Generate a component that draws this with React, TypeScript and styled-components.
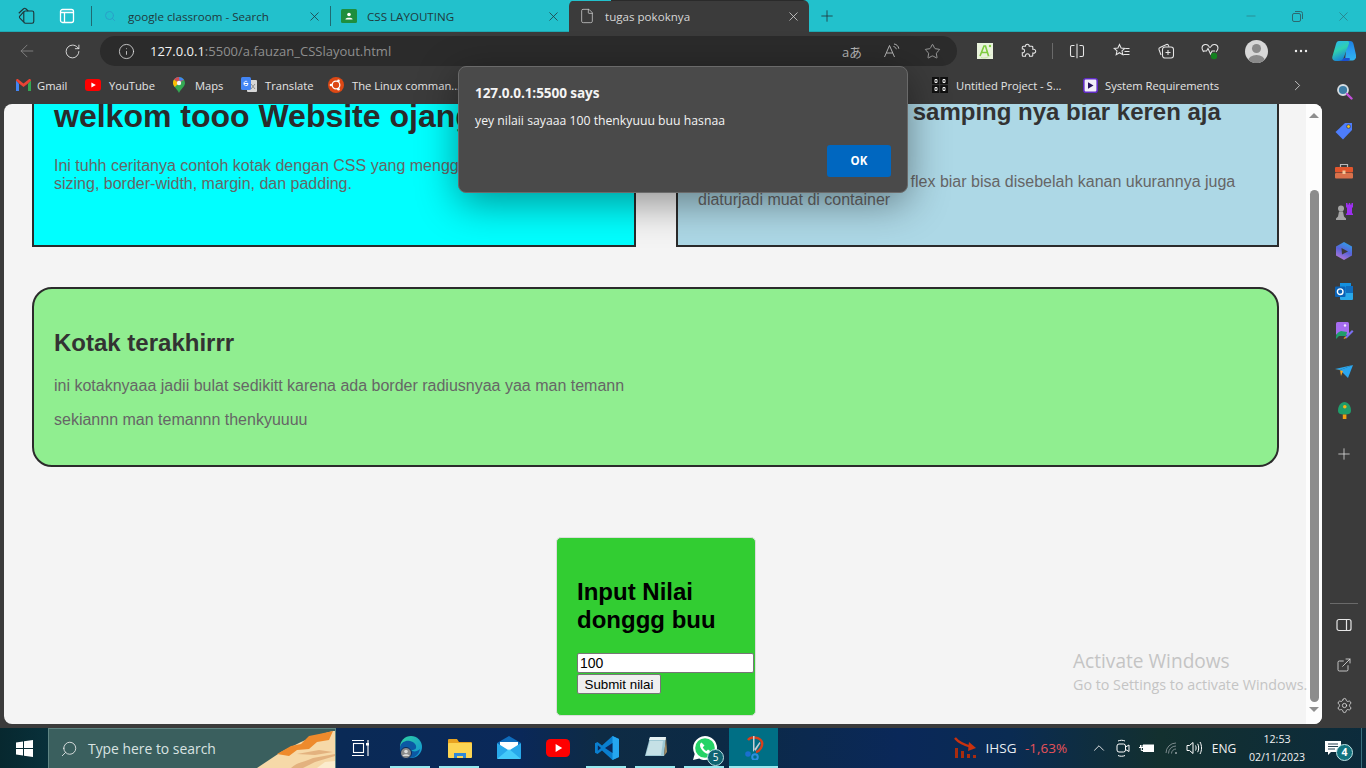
import React from 'react';
import styled, { createGlobalStyle } from 'styled-components';
import {
  ArrowLeft,
  ChevronRight,
  ChevronUp,
  ExternalLink,
  File,
  Info,
  Minus,
  Plus,
  RotateCw,
  Search,
  Settings,
  Star,
  X,
} from 'lucide-react';

const GlobalStyle = createGlobalStyle`
  html, body {
    margin: 0;
    padding: 0;
    overflow: hidden;
    background: #3b3b3b;
  }
`;

const uiFont = `'Open Sans', 'Noto Sans', sans-serif`;
const pageFont = `'Liberation Sans', Arial, sans-serif`;

const Screen = styled.div`
  position: relative;
  width: 1366px;
  height: 768px;
  display: flex;
  flex-direction: column;
  overflow: hidden;
  background: #3b3b3b;
  font-family: ${uiFont};
`;

/* ---- tab strip ---- */

const TabStrip = styled.div`
  height: 32px;
  flex: 0 0 auto;
  display: flex;
  align-items: stretch;
  padding-left: 6px;
  background: #22c1cc;
  box-shadow: inset 0 -1px 0 #1ea9b3;
  color: #1f3438;
`;

const Slot = styled.div<{ $w?: number; $ml?: number }>`
  width: ${(p) => p.$w ?? 44}px;
  margin-left: ${(p) => p.$ml ?? 0}px;
  flex: 0 0 auto;
  display: flex;
  align-items: center;
  justify-content: center;
  color: inherit;
`;

const TabSep = styled.div`
  width: 1px;
  height: 20px;
  align-self: center;
  background: #1f6a72;
  flex: 0 0 auto;
`;

const Tab = styled.div<{ $active?: boolean }>`
  width: ${(p) => (p.$active ? 240 : 238)}px;
  flex: 0 0 auto;
  display: flex;
  align-items: center;
  padding: 0 8px 0 9px;
  box-sizing: border-box;
  font-size: 11.6px;
  color: ${(p) => (p.$active ? '#d6d6d6' : '#20393d')};
  background: ${(p) =>
    p.$active ? 'linear-gradient(90deg, #22c1cc 42px, #2a2a2a 42px) 0 0 / 100% 1px no-repeat, #3b3b3b' : 'transparent'};
  border-radius: ${(p) => (p.$active ? '6px 6px 0 0' : '0')};
`;

const TabIcon = styled.div`
  width: 18px;
  height: 18px;
  flex: 0 0 auto;
  display: flex;
  align-items: center;
  justify-content: center;
  margin-right: 9px;
`;

const TabTitle = styled.span`
  flex: 1 1 auto;
  white-space: nowrap;
`;

const Grow = styled.div`
  flex: 1 1 auto;
`;

/* ---- toolbar ---- */

const Toolbar = styled.div`
  height: 36px;
  flex: 0 0 auto;
  display: flex;
  align-items: center;
  box-sizing: border-box;
  padding: 2px 0 0 5px;
  background: #3b3b3b;
  color: #e6e6e6;
`;

const AddressBar = styled.div`
  width: 857px;
  height: 30px;
  margin-left: 6px;
  flex: 0 0 auto;
  display: flex;
  align-items: center;
  padding: 0 5px 0 18px;
  box-sizing: border-box;
  border-radius: 15px;
  background: #2b2b2b;
  color: #bdbdbd;
`;

const Url = styled.div`
  margin-left: 15px;
  font-size: 13px;
  color: #8f8f8f;
  white-space: nowrap;
  flex: 1 1 auto;

  b {
    font-weight: 400;
    color: #f2f2f2;
  }
`;

const ToolSep = styled.div`
  width: 1px;
  height: 16px;
  margin: 0 1px;
  background: #6a6a6a;
  flex: 0 0 auto;
`;

const TranslateGlyph = styled.span`
  font-size: 13px;
  color: #b5b5b5;
  font-family: ${uiFont}, 'Noto Sans CJK JP';
  white-space: nowrap;
`;

const Avatar = styled.div`
  width: 23px;
  height: 23px;
  border-radius: 50%;
  overflow: hidden;
  background: #d8d8d8;
  position: relative;

  &::before {
    content: '';
    position: absolute;
    left: 7px;
    top: 4px;
    width: 9px;
    height: 9px;
    border-radius: 50%;
    background: #8a8a8a;
  }

  &::after {
    content: '';
    position: absolute;
    left: 3px;
    top: 15px;
    width: 17px;
    height: 12px;
    border-radius: 50%;
    background: #8a8a8a;
  }
`;

/* ---- body below toolbar ---- */

const Workspace = styled.div`
  flex: 1 1 auto;
  min-height: 0;
  display: flex;
`;

const BrowserColumn = styled.div`
  width: 1322px;
  flex: 0 0 auto;
  display: flex;
  flex-direction: column;
`;

const Bookmarks = styled.div`
  height: 36px;
  flex: 0 0 auto;
  display: flex;
  align-items: center;
  box-sizing: border-box;
  padding: 0 0 2px 15px;
  color: #e4e4e4;
  font-size: 11.2px;
`;

const Bookmark = styled.div<{ $w: number; $gap?: number }>`
  width: ${(p) => p.$w}px;
  flex: 0 0 auto;
  display: flex;
  align-items: center;
  gap: ${(p) => p.$gap ?? 8}px;
  white-space: nowrap;
`;

const BookmarkIcon = styled.div`
  width: 16px;
  height: 16px;
  flex: 0 0 auto;
  display: flex;
  align-items: center;
  justify-content: center;
`;

const PagePanel = styled.div`
  flex: 1 1 auto;
  min-height: 0;
  margin: 0 0 4px 4px;
  display: flex;
  border-radius: 8px;
  overflow: hidden;
  background: #f4f4f4;
`;

const PageScroll = styled.div`
  flex: 1 1 auto;
  min-width: 0;
  overflow: hidden;
  font-family: ${pageFont};
  color: #333;
`;

const PageInner = styled.div`
  margin-top: -40px;
  padding: 0 27px 0 28px;
`;

const CardRow = styled.div`
  display: flex;
  gap: 40px;
`;

const Card = styled.section<{ $bg: string; $w: number }>`
  width: ${(p) => p.$w}px;
  height: 183px;
  flex: 0 0 auto;
  box-sizing: border-box;
  padding: 32px 20px 0;
  border: 2px solid #2b2b2b;
  background: ${(p) => p.$bg};
`;

const BigTitle = styled.h1`
  margin: 0 0 22px;
  font-size: 32px;
  line-height: 37px;
  font-weight: 700;
  white-space: nowrap;
  color: #2b2b2b;
`;

const Title = styled.h2`
  margin: 0 0 19px;
  font-size: 24px;
  line-height: 28px;
  font-weight: 700;
  color: #333;
`;

const Text = styled.p`
  margin: 0;
  font-size: 16px;
  line-height: 18px;
  color: #666;
`;

const RoundCard = styled.section`
  margin-top: 40px;
  height: 180px;
  box-sizing: border-box;
  padding: 40px 20px 0;
  border: 2px solid #2b2b2b;
  border-radius: 20px;
  background: #90ee90;

  ${Title} {
    margin-bottom: 20px;
  }

  ${Text} {
    margin-bottom: 16px;
  }
`;

const FormCard = styled.form`
  width: 200px;
  height: 179px;
  margin: 70px 0 0 524px;
  box-sizing: border-box;
  padding: 40px 20px 0;
  border: 1px solid #dcdcdc;
  border-radius: 5px;
  background: #32cd32;

  ${Title} {
    margin-bottom: 19px;
    color: #000;
  }
`;

const ScoreInput = styled.input`
  display: block;
  width: 177px;
  height: 20px;
  box-sizing: border-box;
  padding: 1px 2px;
  margin: 0;
  font-family: ${pageFont};
  font-size: 14px;
  border: 1px solid #767676;
  border-radius: 2px;
  background: #fff;
  color: #000;
`;

const SubmitButton = styled.button`
  display: block;
  width: 84px;
  height: 20px;
  margin: 1px 0 0;
  padding: 0;
  font-family: ${pageFont};
  font-size: 13.33px;
  color: #000;
  border: 1px solid #767676;
  border-radius: 2px;
  background: #efefef;
`;

const Scrollbar = styled.div`
  width: 16px;
  flex: 0 0 auto;
  display: flex;
  flex-direction: column;
  align-items: center;
  background: #fdfdfd;
`;

const ScrollArrow = styled.div<{ $down?: boolean }>`
  width: 0;
  height: 0;
  margin: ${(p) => (p.$down ? '5px 0 0' : '9px 0 0')};
  border-left: 5px solid transparent;
  border-right: 5px solid transparent;
  border-bottom: ${(p) => (p.$down ? '0' : '5px solid #8f8f8f')};
  border-top: ${(p) => (p.$down ? '5px solid #8f8f8f' : '0')};
`;

const ScrollThumb = styled.div`
  width: 9px;
  height: 512px;
  margin-top: 72px;
  border-radius: 5px;
  background: #8c8c8c;
`;

/* ---- edge sidebar ---- */

const Sidebar = styled.aside`
  width: 44px;
  flex: 0 0 auto;
  display: flex;
  flex-direction: column;
  align-items: center;
  padding: 3px 0 3px;
  box-sizing: border-box;
  color: #e6e6e6;
`;

const SideIcon = styled.div<{ $mt?: number }>`
  width: 44px;
  height: 40px;
  margin-top: ${(p) => p.$mt ?? 0}px;
  flex: 0 0 auto;
  display: flex;
  align-items: center;
  justify-content: center;
`;

const SideRule = styled.div`
  width: 28px;
  height: 1px;
  flex: 0 0 auto;
  margin-bottom: 1px;
  background: #6a6a6a;
`;

/* ---- taskbar ---- */

const Taskbar = styled.footer`
  height: 40px;
  flex: 0 0 auto;
  display: flex;
  align-items: stretch;
  color: #f2f2f2;
  background: linear-gradient(
    90deg,
    #07282f 0,
    #08303a 48px,
    #0a2a56 340px,
    #0a2859 520px,
    #0e2b44 600px,
    #0c2a45 720px,
    #0a2859 900px,
    #0a2b52 1010px,
    #13302f 1160px,
    #0c2b3c 1366px
  );
`;

const StartButton = styled.div`
  width: 48px;
  flex: 0 0 auto;
  display: flex;
  align-items: center;
  justify-content: center;
`;

const SearchBox = styled.div`
  width: 288px;
  flex: 0 0 auto;
  position: relative;
  overflow: hidden;
  display: flex;
  align-items: center;
  gap: 10px;
  box-sizing: border-box;
  padding-left: 11px;
  border: 1px solid #5f8583;
  border-bottom: 0;
  background: #3a5f5e;
  color: #d9e3e2;
  font-size: 13.9px;
`;

const SearchArt = styled.svg`
  position: absolute;
  right: 0;
  bottom: 0;
`;

const TaskButton = styled.div<{ $on?: boolean; $active?: boolean; $w?: number }>`
  position: relative;
  width: ${(p) => p.$w ?? 49}px;
  flex: 0 0 auto;
  display: flex;
  align-items: center;
  justify-content: center;
  background: ${(p) => (p.$active ? '#006f85' : 'transparent')};

  &::after {
    content: '';
    display: ${(p) => (p.$on ? 'block' : 'none')};
    position: absolute;
    bottom: 0;
    left: ${(p) => (p.$active ? 0 : 4)}px;
    right: ${(p) => (p.$active ? 0 : 5)}px;
    height: 2px;
    background: #97e9ef;
  }
`;

const CountBadge = styled.span`
  position: absolute;
  right: 5px;
  bottom: 2px;
  width: 15px;
  height: 15px;
  border-radius: 50%;
  border: 1px solid #bcdfe3;
  background: #0f6472;
  color: #fff;
  font-size: 10px;
  line-height: 15px;
  text-align: center;
`;

const Tray = styled.div`
  display: flex;
  align-items: center;
  flex: 0 0 auto;
  font-size: 12px;
`;

const TrayItem = styled.div<{ $w: number; $ml?: number }>`
  width: ${(p) => p.$w}px;
  margin-left: ${(p) => p.$ml ?? 0}px;
  flex: 0 0 auto;
  display: flex;
  align-items: center;
  justify-content: center;
`;

const Ticker = styled.span<{ $down?: boolean }>`
  font-size: 13.5px;
  white-space: nowrap;
  color: ${(p) => (p.$down ? '#e8525a' : '#e8eef2')};
`;

const Clock = styled.div`
  width: 68px;
  flex: 0 0 auto;
  text-align: center;
  font-size: 10.6px;
  line-height: 18px;
`;

const Notify = styled.div`
  position: relative;
  width: 51px;
  height: 40px;
  flex: 0 0 auto;
  display: flex;
  align-items: center;
  justify-content: center;
  box-sizing: border-box;
  padding-right: 7px;
  border-right: 1px solid #3b6f7d;
  margin-right: 4px;
`;

const NotifyCount = styled.span`
  position: absolute;
  left: 25px;
  top: 16px;
  width: 15px;
  height: 15px;
  border-radius: 50%;
  border: 1px solid #bfe3e6;
  background: #12737f;
  color: #fff;
  font-size: 10.5px;
  font-weight: 700;
  line-height: 15px;
  text-align: center;
`;

/* ---- overlays ---- */

const Dialog = styled.div`
  position: absolute;
  left: 458px;
  top: 66px;
  width: 450px;
  height: 127px;
  box-sizing: border-box;
  padding: 17px 16px 0;
  border: 1px solid #6a6a6a;
  border-radius: 8px;
  background: #4a4a4a;
  color: #f4f4f4;
  box-shadow: 0 10px 40px rgba(0, 0, 0, 0.42);
`;

const DialogTitle = styled.div`
  font-size: 13.6px;
  line-height: 18px;
  font-weight: 700;
  letter-spacing: -0.1px;
`;

const DialogMessage = styled.div`
  margin-top: 10px;
  font-size: 12.24px;
  line-height: 18px;
`;

const DialogActions = styled.div`
  display: flex;
  justify-content: flex-end;
  margin-top: 15px;
`;

const OkButton = styled.div`
  width: 64px;
  height: 32px;
  border-radius: 3px;
  background: #0067c0;
  color: #fff;
  font-size: 11.5px;
  font-weight: 700;
  line-height: 32px;
  text-align: center;
`;

const Watermark = styled.div`
  position: absolute;
  left: 1073px;
  top: 649px;
  color: #c4c4c4;
  white-space: nowrap;
  pointer-events: none;

  div:first-child {
    font-size: 19.1px;
    line-height: 25px;
  }

  div:last-child {
    font-size: 14.3px;
    line-height: 21px;
  }
`;

/* ---- hand drawn icons ---- */

const WorkspacesIcon = () => (
  <svg width="20" height="20" viewBox="0 0 18 18" fill="none" stroke="currentColor" strokeWidth="1">
    <rect x="7" y="4.500" width="9" height="11" rx="1.500" />
    <path d="M7 14.500 3.500 11a1.400 1.400 0 0 1 0-2L7 5M11 4.500 8.800 2.500a1.400 1.400 0 0 0-2 0L2.500 6.500" />
  </svg>
);

const TabActionsIcon = () => (
  <svg width="16" height="16" viewBox="0 0 16 16" fill="none" stroke="#ffffff" strokeWidth="1.300">
    <rect x="1.500" y="1.500" width="13" height="13" rx="2" fill="#22c1cc" />
    <path d="M1.500 4.500h13M5.500 4.500v10" />
  </svg>
);

const ClassroomIcon = () => (
  <svg width="16" height="14" viewBox="0 0 16 14">
    <rect width="16" height="14" rx="1.500" fill="#1e8e3e" />
    <circle cx="8" cy="5.500" r="1.800" fill="#fff" />
    <path d="M4.500 10c.5-1.800 6.500-1.800 7 0v.6h-7z" fill="#fff" />
  </svg>
);

const GmailIcon = () => (
  <svg width="15" height="12" viewBox="0 0 15 12">
    <path d="M0 1.500V12h3V4.500z" fill="#4285f4" />
    <path d="M15 1.500V12h-3V4.500z" fill="#34a853" />
    <path d="M0 1.500C0 .2 1.500-.4 2.400.4L7.500 4.500 12.600.4c.9-.8 2.400-.2 2.400 1.100L12 4.500 7.500 8 3 4.500z" fill="#ea4335" />
  </svg>
);

const YoutubeIcon = ({ size = 16 }: { size?: number }) => (
  <svg width={size} height={(size * 12) / 16} viewBox="0 0 16 12">
    <rect width="16" height="12" rx="3" fill="#f00" />
    <path d="M6.400 3.400 10.800 6l-4.400 2.600z" fill="#fff" />
  </svg>
);

const MapsIcon = () => (
  <svg width="12" height="16" viewBox="0 0 12 16">
    <path d="M6 0a6 6 0 0 1 6 6c0 3.500-4.200 6-6 10C4.200 12 0 9.500 0 6a6 6 0 0 1 6-6z" fill="#34a853" />
    <path d="M1 2.500 6 6l5-3.200A6 6 0 0 0 6 0a6 6 0 0 0-5 2.500z" fill="#4285f4" />
    <path d="M0 6c0 1.500.8 2.800 1.800 4L6 6 1 2.500A6 6 0 0 0 0 6z" fill="#fbbc04" />
    <path d="M11 2.800 6 6 1 2.500C2 1 4 0 6 0l.5 4z" fill="#ea4335" opacity=".85" />
    <circle cx="6" cy="6" r="2.200" fill="#f4f4f4" />
  </svg>
);

const TranslateIcon = () => (
  <svg width="16" height="16" viewBox="0 0 16 16">
    <rect x="6" y="3" width="10" height="12" rx="1" fill="#d7d7d7" />
    <rect width="10" height="13" rx="1.500" fill="#4285f4" />
    <path d="M3 6.500h4M7 6.500a2 2.200 0 1 1-.7-1.700" fill="none" stroke="#fff" strokeWidth="1" />
    <path d="m10 7 4 5M14 7l-4 5" stroke="#8d8d8d" strokeWidth="1" />
  </svg>
);

const UbuntuIcon = () => (
  <svg width="16" height="16" viewBox="0 0 16 16">
    <circle cx="8" cy="8" r="8" fill="#dd4814" />
    <circle cx="8" cy="8" r="3.800" fill="none" stroke="#fff" strokeWidth="1.300" />
    <circle cx="3" cy="8" r="1.300" fill="#fff" />
    <circle cx="10.500" cy="3.700" r="1.300" fill="#fff" />
    <circle cx="10.500" cy="12.300" r="1.300" fill="#fff" />
  </svg>
);

const CodeOrgIcon = () => (
  <svg width="16" height="16" viewBox="0 0 16 16">
    <rect width="16" height="16" fill="#111" />
    <path d="M3 2.500h2v3H3zM11 2.500h2v3h-2zM3 10.500h2v3H3zM11 10.500h2v3h-2z" fill="none" stroke="#f2f2f2" strokeWidth="1" />
    <path d="M7.700 0v16M0 7.700h16" stroke="#3b3b3b" strokeWidth="1" />
  </svg>
);

const SystemReqIcon = () => (
  <svg width="15" height="15" viewBox="0 0 15 15">
    <rect x=".8" y=".8" width="13.400" height="13.400" rx="2" fill="#f1eef8" stroke="#5f2bc4" strokeWidth="1.600" />
    <path d="M5 4.200 10.500 7.500 5 10.800z" fill="#27115c" />
  </svg>
);

const ReadAloudIcon = () => (
  <svg width="18" height="16" viewBox="0 0 18 16" fill="none" stroke="#b5b5b5" strokeWidth="1">
    <path d="M1.500 14 6.500 2.500 11.500 14M3.300 10h6.400M10.500 3.500c1.500.3 2.500 1.300 2.800 2.700M11 1c2.700.4 4.400 2 4.800 4.700" />
  </svg>
);

const AppGreenIcon = () => (
  <svg width="16" height="16" viewBox="0 0 16 16">
    <rect width="16" height="16" fill="#e9f3dc" />
    <path d="M3 13 7 3h1.500l3 10M5 9.500h6" fill="none" stroke="#7ecb3f" strokeWidth="1.600" />
    <circle cx="13" cy="3" r="1.200" fill="#7ecb3f" />
    <path d="M4 14.500c3.500 1 7 .5 10-3" fill="none" stroke="#c6e2a8" strokeWidth="1" />
  </svg>
);

const PuzzleIcon = () => (
  <svg width="16" height="16" viewBox="0 0 16 16" fill="none" stroke="currentColor" strokeWidth="1.050">
    <path d="M6.300 1.200c1.400 0 2 1 1.900 2h2.600a1 1 0 0 1 1 1v2.100c1.600-.4 2.900.6 2.900 1.900s-1.300 2.300-2.900 1.900v2.200a1 1 0 0 1-1 1H8.500c.2-1.700-.8-2.600-2-2.600s-2.200.9-2 2.600H2.300c-.6 0-1-.4-1-1v-2.600c1.400.2 2.300-.7 2.300-1.900S2.700 5.700 1.300 5.900V4.200c0-.6.400-1 1-1h2.200c-.1-1 .5-2 1.800-2z" />
  </svg>
);

const SplitIcon = () => (
  <svg width="16" height="16" viewBox="0 0 16 16" fill="none" stroke="currentColor" strokeWidth="1.050">
    <path d="M5.500 2.500H3a1.500 1.500 0 0 0-1.500 1.500v8A1.500 1.500 0 0 0 3 13.500h2.500M10.500 2.500H13A1.500 1.500 0 0 1 14.500 4v8a1.500 1.500 0 0 1-1.500 1.500h-2.500M8 .8v14.400" />
  </svg>
);

const FavoritesIcon = () => (
  <svg width="18" height="16" viewBox="0 0 18 16" fill="none" stroke="currentColor" strokeWidth="1.050">
    <path d="M6.500 1.500 8.100 5l3.700.4-2.800 2.500.8 3.700-3.300-1.900-3.300 1.900.8-3.700L1.200 5.400 4.900 5zM12.500 5.500h4M11.500 8.500h5M10.500 11.500h6" />
  </svg>
);

const CollectionsIcon = () => (
  <svg width="18" height="18" viewBox="0 0 18 18" fill="none" stroke="currentColor" strokeWidth="1.050">
    <rect x="5.500" y="5" width="11" height="11" rx="2.500" />
    <path d="M11 8v5M8.500 10.500h5M4 13 2 7.500c-.3-1 .2-1.800 1-2.100L9.500 2.500c.8-.3 1.700.1 2 1l.5 1.200" />
  </svg>
);

const HealthIcon = () => (
  <svg width="18" height="18" viewBox="0 0 18 18">
    <path
      d="M3 10C1.500 8.500 1 7.500 1 6a3.700 3.700 0 0 1 7-1.500l1 1 1-1A3.700 3.700 0 0 1 17 6c0 1.500-.5 2.500-2 4M1.500 9H5.500L7 6.500 9.500 12 11 9h3"
      fill="none"
      stroke="#e6e6e6"
      strokeWidth="1.050"
    />
    <circle cx="13" cy="14" r="3.200" fill="#13801f" />
  </svg>
);

const CopilotIcon = () => (
  <svg width="24" height="22" viewBox="0 0 24 22">
    <defs>
      <linearGradient id="copL" x1="0.2" y1="0" x2="0.6" y2="1">
        <stop offset="0" stopColor="#2ab8ee" />
        <stop offset="0.45" stopColor="#2fd0b0" />
        <stop offset="1" stopColor="#1778d8" />
      </linearGradient>
      <linearGradient id="copR" x1="0.5" y1="0" x2="0.5" y2="1">
        <stop offset="0" stopColor="#1d7fe0" />
        <stop offset="0.5" stopColor="#2a9cf0" />
        <stop offset="1" stopColor="#2fb6ee" />
      </linearGradient>
    </defs>
    <path d="M15 1h3c2 0 3 1 3.500 3L24 15c.5 3-1 5-3.500 5.500H13z" fill="url(#copR)" />
    <path d="M8 21h7c2.500 0 3.500-1 2.500-3H12z" fill="#1b4fd0" />
    <path d="M7 1h8c1.500 0 2.500 1 2 2.500L12 17c-.8 2.500-2.500 4-5 4H4c-3 0-4.300-2-3.600-4.500L4 4C4.500 2 5.500 1 7 1z" fill="url(#copL)" />
  </svg>
);

const SearchSideIcon = () => (
  <svg width="17" height="17" viewBox="0 0 17 17">
    <circle cx="7" cy="7" r="5" fill="#3d7da6" stroke="#d6dde2" strokeWidth="1.800" />
    <path d="m11 11 4.500 4.500" stroke="#c14fd8" strokeWidth="2.400" strokeLinecap="round" />
  </svg>
);

const TagIcon = () => (
  <svg width="18" height="18" viewBox="0 0 18 18">
    <path d="M10 1h7v7l-9 9.500-7.500-7.500z" fill="#4d7dfb" />
    <circle cx="13.500" cy="4.500" r="1.900" fill="#f5c518" stroke="#243a8c" strokeWidth=".8" />
  </svg>
);

const ToolboxIcon = () => (
  <svg width="18" height="16" viewBox="0 0 18 16">
    <path d="M5.500 4V1.500h7V4" fill="none" stroke="#b9b9b9" strokeWidth="1.200" />
    <rect y="4" width="18" height="5.500" rx="1" fill="#e2562d" />
    <rect y="10" width="18" height="5.500" rx="1" fill="#d9714b" />
    <rect x="7.500" y="7.500" width="3" height="3.500" fill="#f2c79a" />
  </svg>
);

const ChessIcon = () => (
  <svg width="19" height="19" viewBox="0 0 19 19">
    <path d="M11 1h1.500v1.500h1.300V1h1.400v1.500h1.300V1H18v4l-1 1v5l1 1v1h-7v-1l1-1V6l-1-1z" fill="#9d2ff0" />
    <circle cx="6" cy="6.500" r="3" fill="#a4a4a4" />
    <path d="M4 9.500h4l1 5 2 2v1.500H1v-1.500l2-2z" fill="#a4a4a4" />
  </svg>
);

const M365Icon = () => (
  <svg width="18" height="18" viewBox="0 0 18 18">
    <defs>
      <linearGradient id="m365" x1="0.7" y1="0" x2="0.3" y2="1">
        <stop offset="0" stopColor="#2f9fe8" />
        <stop offset="0.5" stopColor="#5a62d8" />
        <stop offset="1" stopColor="#b47ad8" />
      </linearGradient>
    </defs>
    <path d="M9 0 17 4.500v9L9 18 1 13.500v-9z" fill="url(#m365)" />
    <path d="M6.500 6 13 9.500 7 12.500z" fill="#3b3b3b" />
  </svg>
);

const OutlookIcon = () => (
  <svg width="18" height="17" viewBox="0 0 18 17">
    <rect x="5" y="0" width="11" height="8" fill="#1490df" />
    <rect x="5" y="8" width="13" height="9" rx="1" fill="#28a8ea" />
    <rect x="11" y="3" width="7" height="7" fill="#0f6cbd" />
    <rect y="3.500" width="10.500" height="10.500" rx="1" fill="#0b62b5" />
    <circle cx="5.200" cy="8.700" r="2.800" fill="none" stroke="#fff" strokeWidth="1.400" />
  </svg>
);

const DesignerIcon = () => (
  <svg width="19" height="19" viewBox="0 0 19 19">
    <rect x="1" y="0" width="13" height="13" rx="1.500" fill="#a66cf0" />
    <circle cx="10" cy="3.500" r="1.200" fill="#f2e9ff" />
    <path d="M1 15c0-3 2-5 5-6l6 1-1 4H4l-3 3z" fill="#1f9d6b" />
    <path d="m10 15 7-7 1.500 1.500-7 7z" fill="#7a6ff0" />
    <path d="m8.500 17 1.500-2.500 1.500 1.500z" fill="#f5a623" />
  </svg>
);

const SendIcon = () => (
  <svg width="18" height="13" viewBox="0 0 18 13">
    <path d="M0 4 18 0 5 5z" fill="#29a8f0" />
    <path d="M5 5 18 0 13 13z" fill="#2ba6ee" />
    <path d="M0 4 5 5l1 6 2-5z" fill="#f5a623" />
  </svg>
);

const TreeIcon = () => (
  <svg width="15" height="18" viewBox="0 0 15 18">
    <path d="M7.500 0C11 0 14 4 14 8.500c0 3-2 4-6.500 4S1 11.500 1 8.500C1 4 4 0 7.500 0z" fill="#1f9d6b" />
    <rect x="5.800" y="12.500" width="3.600" height="4.500" fill="#ef9d11" />
    <circle cx="7.800" cy="4.800" r="1.800" fill="#f5b21b" />
  </svg>
);

const PanelIcon = () => (
  <svg width="16" height="14" viewBox="0 0 16 14" fill="none" stroke="currentColor" strokeWidth="1.200">
    <rect x="1" y="1.500" width="14" height="11" rx="2" />
    <path d="M10.500 1.500v11" />
  </svg>
);

const WindowsLogo = () => (
  <svg width="17" height="17" viewBox="0 0 17 17" fill="#fff">
    <path d="M0 2.400 7 1.400V8H0zM8 1.200 17 0v8H8zM0 9h7v6.600l-7-1zM8 9h9v8l-9-1.200z" />
  </svg>
);

const HillArt = () => (
  <SearchArt width="78" height="40" viewBox="0 0 78 40">
    <path d="M0 40 24 24l20-10L58 8l18-5h2v37z" fill="#f6d9a8" />
    <path d="M20 26 34 18l10-2 8-8 10-2 14-3-4 9-12 2-8 7-12 1-8 6z" fill="#ee8a2c" />
    <path d="M34 40c6-6 14-6 22-10l22-4v2l-20 6-12 6zM40 26l22-4 14 2-18 3z" fill="#e3b27f" />
    <path d="M60 40l8-6 10-1v7z" fill="#fbeccd" />
  </SearchArt>
);

const TaskViewIcon = () => (
  <svg width="18" height="18" viewBox="0 0 18 18" fill="none" stroke="#fff" strokeWidth="1.100">
    <path d="M0 1.500h12M0 16.500h12M16 1v16" />
    <rect x="1.500" y="4.500" width="10" height="9" />
    <rect x="14" y="4" width="3" height="2.500" fill="#fff" stroke="none" />
  </svg>
);

const EdgeIcon = () => (
  <svg width="24" height="24" viewBox="0 0 24 24">
    <defs>
      <linearGradient id="edgeA" x1="0" y1="0" x2="1" y2="1">
        <stop offset="0" stopColor="#2fd3a0" />
        <stop offset="1" stopColor="#0f8fd8" />
      </linearGradient>
    </defs>
    <circle cx="12" cy="11" r="11" fill="url(#edgeA)" />
    <path d="M1 11C2 6 7 4 11 5c4 1 7 4 6 7-.5 1.500-2 2-5 2 2 2 6 2 9-1-1 6-6 9-10 9C5 22 0 17 1 11z" fill="#0c59a4" />
    <circle cx="7" cy="17" r="5.500" fill="#8b8b8b" stroke="#0a2859" />
    <circle cx="7" cy="15.500" r="1.800" fill="#dcdcdc" />
    <path d="M3.500 20c.5-2.500 6.500-2.500 7 0z" fill="#dcdcdc" />
  </svg>
);

const ExplorerIcon = () => (
  <svg width="24" height="20" viewBox="0 0 24 20">
    <path d="M0 2a1 1 0 0 1 1-1h8l2 3h12a1 1 0 0 1 1 1v3H0z" fill="#e8a320" />
    <rect y="5" width="24" height="15" rx="1" fill="#fcd553" />
    <path d="M6 15h12v5h-3v-2H9v2H6z" fill="#2f88d8" />
  </svg>
);

const MailIcon = () => (
  <svg width="24" height="24" viewBox="0 0 24 24">
    <path d="M0 7 12 0l12 7-12 8z" fill="#0f6cbd" />
    <path d="M3 6h18v8l-9 5-9-5z" fill="#fff" />
    <path d="M0 7v15a1 1 0 0 0 1 1h22a1 1 0 0 0 1-1V7l-12 7.500z" fill="#28a8ea" />
    <path d="M0 23 12 13l12 10z" fill="#50d9ff" opacity=".7" />
  </svg>
);

const VsCodeIcon = () => (
  <svg width="24" height="24" viewBox="0 0 24 24">
    <path d="M17.500 0 24 3v18l-6.500 3L7 14.500 2.500 18 0 16.700V7.300L2.500 6 7 9.500z" fill="#0a7fcf" />
    <path d="M17.500 0 24 3v18l-6.500 3z" fill="#25a6f0" />
    <path d="M17.500 7 10 12l7.500 5z" fill="#0a2859" />
    <path d="M2.800 9.300 6 12l-3.200 2.700z" fill="#0a2859" />
  </svg>
);

const NotepadIcon = () => (
  <svg width="24" height="24" viewBox="0 0 24 24">
    <path d="M6 1h16l-2 19H1z" fill="#9ec8d4" />
    <path d="M6 1h16l-.3 3H5z" fill="#e6f2f4" />
    <path d="m2 19 4-14h13l-2 14z" fill="#c5e0e6" />
    <path d="M22 1l1 15-3 4z" fill="#a08a62" />
  </svg>
);

const WhatsappIcon = () => (
  <svg width="24" height="24" viewBox="0 0 24 24">
    <path d="M12 0a12 12 0 0 1 0 24c-2 0-4-.5-5.700-1.500L0 24l1.700-6A12 12 0 0 1 12 0z" fill="#fff" />
    <circle cx="12" cy="12" r="9.800" fill="#25d366" />
    <path d="M8.500 6.500c-1.500 1-2 2.500-1 5 1 2.500 3.500 5 6 6 2 .5 3.500 0 4.500-2l-3-2-1.500 1.500c-1.500-.5-3-2-3.700-3.700L11.500 9.500z" fill="#fff" />
  </svg>
);

const SnipIcon = () => (
  <svg width="20" height="24" viewBox="0 0 20 24">
    <path d="M4 4c3-4 12-3 14 2 1 4-2 9-6 10" fill="none" stroke="#d8401c" strokeWidth="2.400" />
    <path d="M9 0h1.500v14L9 16zM10.500 13l5-7 1 1-5 8z" fill="#c8ced3" />
    <circle cx="4" cy="18" r="2.800" fill="#1a6fd0" />
    <circle cx="11" cy="21" r="2.800" fill="none" stroke="#2d8ee0" strokeWidth="2" />
  </svg>
);

const StockDownIcon = () => (
  <svg width="24" height="22" viewBox="0 0 24 22">
    <path d="M1 1c4 5 9 7 17 9" fill="none" stroke="#c9320f" strokeWidth="2.400" />
    <path d="m15 5 7 6-8 3z" fill="#c9320f" />
    <path d="M1 11h3v10H1zM7 14h3v7H7zM13 17h3v4h-3zM19 18h3v3h-3z" fill="#a92c0f" />
  </svg>
);

const MeetIcon = () => (
  <svg width="14" height="18" viewBox="0 0 14 18" fill="none" stroke="#fff" strokeWidth="1">
    <rect x="1" y="5" width="8.500" height="8" rx="2" />
    <path d="m9.500 8 3.500-2v6.500L9.500 10.500M2 2c2-1 5-1 7 0M2 16.500c2 1 5 1 7 0" />
  </svg>
);

const BatteryIcon = () => (
  <svg width="16" height="12" viewBox="0 0 16 12">
    <rect x="4" y="2.500" width="11" height="7.500" fill="#fff" />
    <path d="M0 5.500h4M1.500 3v2M3 3v2M2.300 6v2.500H4" fill="none" stroke="#fff" strokeWidth="1" />
  </svg>
);

const WifiIcon = () => (
  <svg width="14" height="13" viewBox="0 0 14 13" fill="none" stroke="#7c8a8d" strokeWidth="1">
    <path d="M1 11a10 10 0 0 1 10-10M3.500 11.500a7.500 7.500 0 0 1 7.500-7.500M6.500 11.500a4.500 4.500 0 0 1 4.500-4.500" />
    <circle cx="11" cy="11" r="1" fill="#9aa5a7" stroke="none" />
  </svg>
);

const VolumeIcon = () => (
  <svg width="17" height="14" viewBox="0 0 17 14" fill="none" stroke="#fff" strokeWidth="1">
    <path d="M1 4.500h2.500L7 1.500v11L3.500 9.500H1zM9.500 4.500c.8 1.500.8 3.500 0 5M11.700 2.800c1.300 2.600 1.300 5.800 0 8.400M14 1c2 3.500 2 8.500 0 12" />
  </svg>
);

const NotifyIcon = () => (
  <svg width="16" height="16" viewBox="0 0 16 16">
    <path d="M0 1h16v11H6l-3 3v-3H0z" fill="#fff" />
    <path d="M3 4h10M3 6.500h10M3 9h7" stroke="#0c2b3c" strokeWidth=".9" />
  </svg>
);

export default function App() {
  return (
    <Screen>
      <GlobalStyle />

      <TabStrip>
        <Slot $w={40}>
          <WorkspacesIcon />
        </Slot>
        <Slot $w={42}>
          <TabActionsIcon />
        </Slot>
        <Slot $w={3} />
        <TabSep />
        <Tab>
          <TabIcon>
            <Search size={12} color="#2aa0c8" strokeWidth={2} />
          </TabIcon>
          <TabTitle>google classroom - Search</TabTitle>
          <X size={15} strokeWidth={1.25} />
        </Tab>
        <TabSep />
        <Tab>
          <TabIcon>
            <ClassroomIcon />
          </TabIcon>
          <TabTitle>CSS LAYOUTING</TabTitle>
          <X size={15} strokeWidth={1.25} />
        </Tab>
        <Tab $active>
          <TabIcon>
            <File size={16} strokeWidth={1.1} />
          </TabIcon>
          <TabTitle>tugas pokoknya</TabTitle>
          <X size={15} strokeWidth={1.25} />
        </Tab>
        <Slot $w={36}>
          <Plus size={18} strokeWidth={1.1} />
        </Slot>
        <Grow />
        <Slot $w={46}>
          <Minus size={14} strokeWidth={1} color="#2c6a70" />
        </Slot>
        <Slot $w={46}>
          <svg width="11" height="11" viewBox="0 0 11 11" fill="none" stroke="#2c6a70">
            <rect x=".5" y="2.500" width="8" height="8" rx="1.500" />
            <path d="M3 .5h5.500a2 2 0 0 1 2 2V8" />
          </svg>
        </Slot>
        <Slot $w={46}>
          <X size={15} strokeWidth={1} color="#2c6a70" />
        </Slot>
      </TabStrip>

      <Toolbar>
        <Slot>
          <ArrowLeft size={20} strokeWidth={1} color="#8a8a8a" />
        </Slot>
        <Slot $ml={1}>
          <RotateCw size={17} strokeWidth={1.25} />
        </Slot>
        <AddressBar>
          <Info size={17} strokeWidth={1.1} color="#e6e6e6" />
          <Url>
            <b>127.0.0.1</b>:5500/a.fauzan_CSSlayout.html
          </Url>
          <Slot $w={40}>
            <TranslateGlyph>aあ</TranslateGlyph>
          </Slot>
          <Slot $w={40}>
            <ReadAloudIcon />
          </Slot>
          <Slot $w={40}>
            <Star size={17} strokeWidth={1.1} color="#b5b5b5" />
          </Slot>
        </AddressBar>
        <Slot $ml={6}>
          <AppGreenIcon />
        </Slot>
        <Slot>
          <PuzzleIcon />
        </Slot>
        <ToolSep />
        <Slot $ml={1}>
          <SplitIcon />
        </Slot>
        <Slot $ml={1}>
          <FavoritesIcon />
        </Slot>
        <Slot>
          <CollectionsIcon />
        </Slot>
        <Slot>
          <HealthIcon />
        </Slot>
        <Slot $ml={2}>
          <Avatar />
        </Slot>
        <Slot $ml={1}>
          <svg width="14" height="4" viewBox="0 0 14 4" fill="#f0f0f0">
            <circle cx="2" cy="2" r="1.200" />
            <circle cx="7" cy="2" r="1.200" />
            <circle cx="12" cy="2" r="1.200" />
          </svg>
        </Slot>
        <Slot $ml={-1}>
          <CopilotIcon />
        </Slot>
      </Toolbar>

      <Workspace>
        <BrowserColumn>
          <Bookmarks>
            <Bookmark $w={70} $gap={6}>
              <BookmarkIcon>
                <GmailIcon />
              </BookmarkIcon>
              Gmail
            </Bookmark>
            <Bookmark $w={86}>
              <BookmarkIcon>
                <YoutubeIcon />
              </BookmarkIcon>
              YouTube
            </Bookmark>
            <Bookmark $w={70}>
              <BookmarkIcon>
                <MapsIcon />
              </BookmarkIcon>
              Maps
            </Bookmark>
            <Bookmark $w={87}>
              <BookmarkIcon>
                <TranslateIcon />
              </BookmarkIcon>
              Translate
            </Bookmark>
            <Bookmark $w={604}>
              <BookmarkIcon>
                <UbuntuIcon />
              </BookmarkIcon>
              The Linux comman...
            </Bookmark>
            <Bookmark $w={150}>
              <BookmarkIcon>
                <CodeOrgIcon />
              </BookmarkIcon>
              Untitled Project - S...
            </Bookmark>
            <Bookmark $w={207} $gap={7}>
              <BookmarkIcon>
                <SystemReqIcon />
              </BookmarkIcon>
              System Requirements
            </Bookmark>
            <ChevronRight size={17} strokeWidth={1.1} />
          </Bookmarks>

          <PagePanel>
            <PageScroll>
              <PageInner>
                <CardRow>
                  <Card $bg="#00ffff" $w={604}>
                    <BigTitle>welkom tooo Website ojang</BigTitle>
                    <Text>
                      Ini tuhh ceritanya contoh kotak dengan CSS yang menggunakan box-
                      <br />
                      sizing, border-width, margin, dan padding.
                    </Text>
                  </Card>
                  <Card $bg="#add8e6" $w={603}>
                    <Title>
                      Ini kotakk yang dii samping nya biar keren aja
                      <br />
                      yaa
                    </Title>
                    <Text>
                      kotak yangg ini, pakai display flex biar bisa disebelah kanan ukurannya juga
                      <br />
                      diaturjadi muat di container
                    </Text>
                  </Card>
                </CardRow>

                <RoundCard>
                  <Title>Kotak terakhirrr</Title>
                  <Text>ini kotaknyaaa jadii bulat sedikitt karena ada border radiusnyaa yaa man temann</Text>
                  <Text>sekiannn man temannn thenkyuuuu</Text>
                </RoundCard>

                <FormCard>
                  <Title>Input Nilai donggg buu</Title>
                  <ScoreInput type="text" value="100" readOnly />
                  <SubmitButton type="button">Submit nilai</SubmitButton>
                </FormCard>
              </PageInner>
            </PageScroll>
            <Scrollbar>
              <ScrollArrow />
              <ScrollThumb />
              <ScrollArrow $down />
            </Scrollbar>
          </PagePanel>
        </BrowserColumn>

        <Sidebar>
          <SideIcon><SearchSideIcon /></SideIcon>
          <SideIcon><TagIcon /></SideIcon>
          <SideIcon><ToolboxIcon /></SideIcon>
          <SideIcon><ChessIcon /></SideIcon>
          <SideIcon><M365Icon /></SideIcon>
          <SideIcon><OutlookIcon /></SideIcon>
          <SideIcon><DesignerIcon /></SideIcon>
          <SideIcon><SendIcon /></SideIcon>
          <SideIcon><TreeIcon /></SideIcon>
          <SideIcon $mt={3}><Plus size={18} strokeWidth={1} /></SideIcon>
          <Grow />
          <SideRule />
          <SideIcon><PanelIcon /></SideIcon>
          <SideIcon><ExternalLink size={16} strokeWidth={1.2} /></SideIcon>
          <SideIcon><Settings size={17} strokeWidth={1.1} /></SideIcon>
        </Sidebar>
      </Workspace>

      <Taskbar>
        <StartButton>
          <WindowsLogo />
        </StartButton>
        <SearchBox>
          <Search size={18} strokeWidth={1.1} color="#f0f0f0" style={{ transform: 'scaleX(-1)' }} />
          Type here to search
          <HillArt />
        </SearchBox>
        <TaskButton $w={50}><TaskViewIcon /></TaskButton>
        <TaskButton $on><EdgeIcon /></TaskButton>
        <TaskButton $on><ExplorerIcon /></TaskButton>
        <TaskButton><MailIcon /></TaskButton>
        <TaskButton><YoutubeIcon size={24} /></TaskButton>
        <TaskButton $on><VsCodeIcon /></TaskButton>
        <TaskButton $on><NotepadIcon /></TaskButton>
        <TaskButton $on>
          <WhatsappIcon />
          <CountBadge>5</CountBadge>
        </TaskButton>
        <TaskButton $on $active><SnipIcon /></TaskButton>
        <Grow />
        <Tray>
          <TrayItem $w={28}><StockDownIcon /></TrayItem>
          <TrayItem $w={42}><Ticker>IHSG</Ticker></TrayItem>
          <TrayItem $w={48}><Ticker $down>-1,63%</Ticker></TrayItem>
          <TrayItem $w={28} $ml={15}><ChevronUp size={18} strokeWidth={1.2} /></TrayItem>
          <TrayItem $w={20}><MeetIcon /></TrayItem>
          <TrayItem $w={28}><BatteryIcon /></TrayItem>
          <TrayItem $w={22}><WifiIcon /></TrayItem>
          <TrayItem $w={22}><VolumeIcon /></TrayItem>
          <TrayItem $w={38}>ENG</TrayItem>
          <Clock>
            12:53
            <br />
            02/11/2023
          </Clock>
          <Notify>
            <NotifyIcon />
            <NotifyCount>4</NotifyCount>
          </Notify>
        </Tray>
      </Taskbar>

      <Dialog>
        <DialogTitle>127.0.0.1:5500 says</DialogTitle>
        <DialogMessage>yey nilaii sayaaa 100 thenkyuuu buu hasnaa</DialogMessage>
        <DialogActions>
          <OkButton>OK</OkButton>
        </DialogActions>
      </Dialog>

      <Watermark>
        <div>Activate Windows</div>
        <div>Go to Settings to activate Windows.</div>
      </Watermark>
    </Screen>
  );
}
